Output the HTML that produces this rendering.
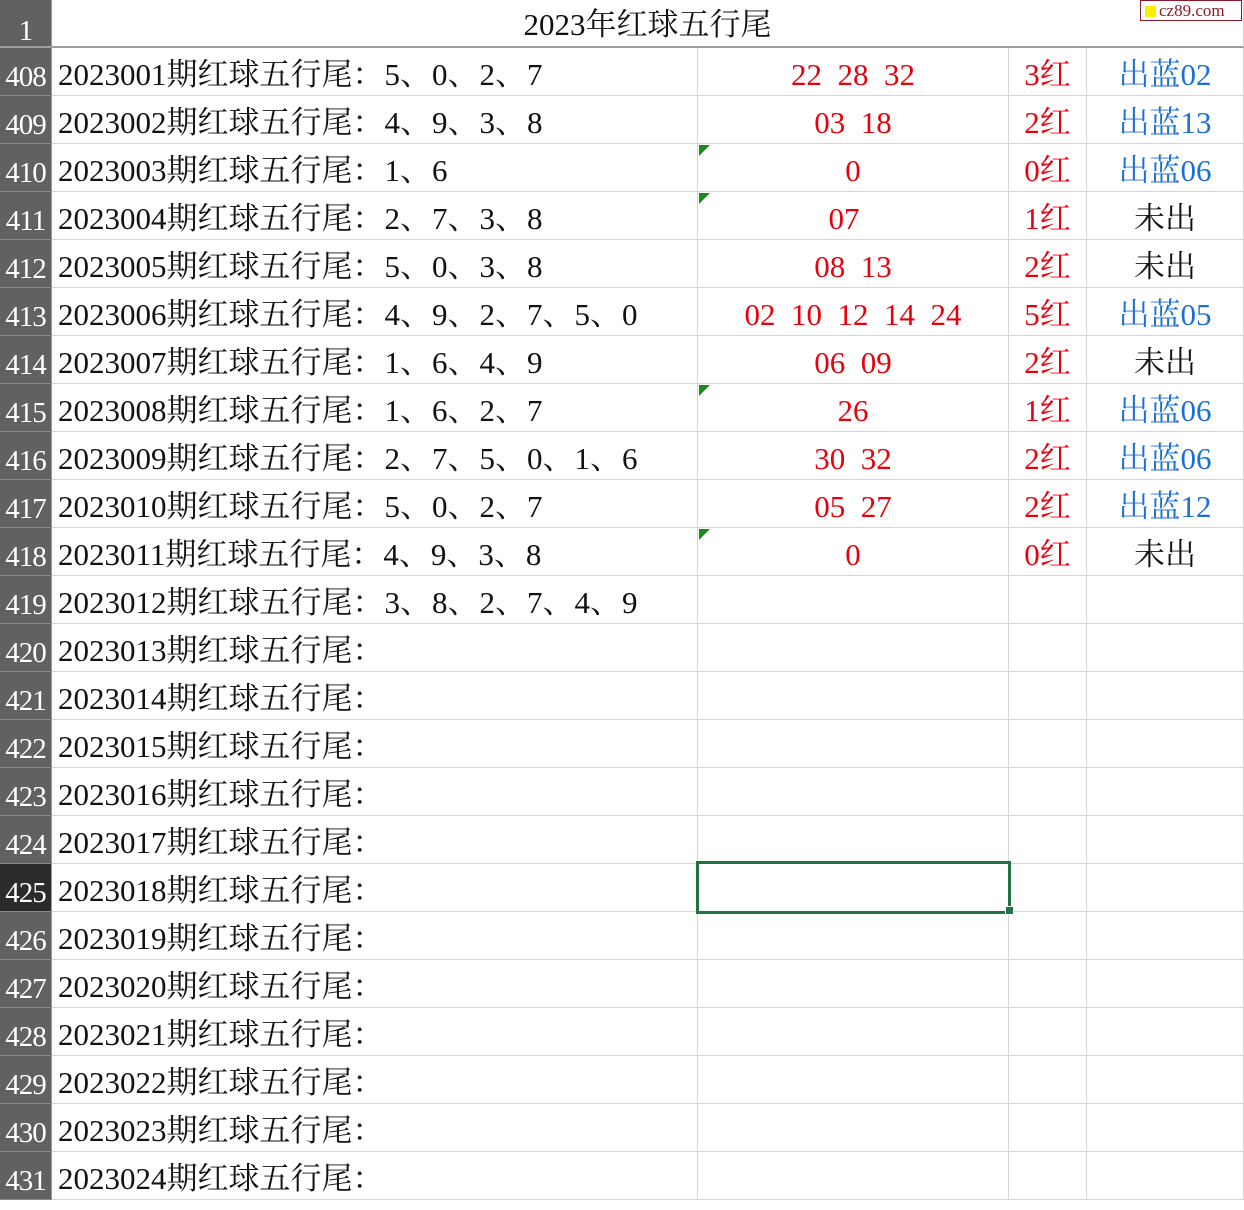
<!DOCTYPE html>
<html><head><meta charset="utf-8"><style>
body{margin:0;width:1244px;height:1198px;overflow:hidden;background:#fff;font-family:"Liberation Serif","Noto Serif CJK SC",serif;position:relative;}
.row{position:absolute;left:0;width:1244px;height:48px;display:flex;}
.row>div{box-sizing:border-box;height:48px;border-right:1px solid #d4d4d4;border-bottom:1px solid #d4d4d4;font-size:31px;white-space:nowrap;line-height:54px;position:relative;overflow:visible;}
.row>.h{width:52px;background:#616161;color:#fff;font-size:29px;text-align:center;border-right:1px solid #9a9a9a;border-bottom:1px solid #8a8a8a;line-height:58px;letter-spacing:-1px;}
.a{width:646px;padding-left:6px;color:#111;}
.b{width:311px;text-align:center;}
.c{width:78px;text-align:center;}
.d{width:157px;text-align:center;}
.p{display:inline-block;width:32px;text-align:left;}
.r{color:#e8000b}.bl{color:#1d6fd8}.k{color:#111}
.t::before{content:"";position:absolute;left:1px;top:1px;border-top:11px solid #1a8a1a;border-right:11px solid transparent;}
</style></head><body>
<div class="row" style="top:0;height:48px">
<div class="h" style="height:48px;border-bottom:2px solid #9e9e9e;line-height:62px">1</div>
<div style="width:1192px;height:48px;border-bottom:2px solid #9e9e9e;text-align:center;line-height:50px;color:#111">2023年红球五行尾</div>
</div>
<div class="row" style="top:48px"><div class="h">408</div><div class="a">2023001期红球五行尾<span class="p">：</span>5<span class="p">、</span>0<span class="p">、</span>2<span class="p">、</span>7</div><div class="b r">22&nbsp;&nbsp;28&nbsp;&nbsp;32</div><div class="c r">3红</div><div class="d bl">出蓝02</div></div>
<div class="row" style="top:96px"><div class="h">409</div><div class="a">2023002期红球五行尾<span class="p">：</span>4<span class="p">、</span>9<span class="p">、</span>3<span class="p">、</span>8</div><div class="b r">03&nbsp;&nbsp;18</div><div class="c r">2红</div><div class="d bl">出蓝13</div></div>
<div class="row" style="top:144px"><div class="h">410</div><div class="a">2023003期红球五行尾<span class="p">：</span>1<span class="p">、</span>6</div><div class="b r t">0</div><div class="c r">0红</div><div class="d bl">出蓝06</div></div>
<div class="row" style="top:192px"><div class="h">411</div><div class="a">2023004期红球五行尾<span class="p">：</span>2<span class="p">、</span>7<span class="p">、</span>3<span class="p">、</span>8</div><div class="b r t" style="padding-right:18px">07</div><div class="c r">1红</div><div class="d k">未出</div></div>
<div class="row" style="top:240px"><div class="h">412</div><div class="a">2023005期红球五行尾<span class="p">：</span>5<span class="p">、</span>0<span class="p">、</span>3<span class="p">、</span>8</div><div class="b r">08&nbsp;&nbsp;13</div><div class="c r">2红</div><div class="d k">未出</div></div>
<div class="row" style="top:288px"><div class="h">413</div><div class="a">2023006期红球五行尾<span class="p">：</span>4<span class="p">、</span>9<span class="p">、</span>2<span class="p">、</span>7<span class="p">、</span>5<span class="p">、</span>0</div><div class="b r">02&nbsp;&nbsp;10&nbsp;&nbsp;12&nbsp;&nbsp;14&nbsp;&nbsp;24</div><div class="c r">5红</div><div class="d bl">出蓝05</div></div>
<div class="row" style="top:336px"><div class="h">414</div><div class="a">2023007期红球五行尾<span class="p">：</span>1<span class="p">、</span>6<span class="p">、</span>4<span class="p">、</span>9</div><div class="b r">06&nbsp;&nbsp;09</div><div class="c r">2红</div><div class="d k">未出</div></div>
<div class="row" style="top:384px"><div class="h">415</div><div class="a">2023008期红球五行尾<span class="p">：</span>1<span class="p">、</span>6<span class="p">、</span>2<span class="p">、</span>7</div><div class="b r t">26</div><div class="c r">1红</div><div class="d bl">出蓝06</div></div>
<div class="row" style="top:432px"><div class="h">416</div><div class="a">2023009期红球五行尾<span class="p">：</span>2<span class="p">、</span>7<span class="p">、</span>5<span class="p">、</span>0<span class="p">、</span>1<span class="p">、</span>6</div><div class="b r">30&nbsp;&nbsp;32</div><div class="c r">2红</div><div class="d bl">出蓝06</div></div>
<div class="row" style="top:480px"><div class="h">417</div><div class="a">2023010期红球五行尾<span class="p">：</span>5<span class="p">、</span>0<span class="p">、</span>2<span class="p">、</span>7</div><div class="b r">05&nbsp;&nbsp;27</div><div class="c r">2红</div><div class="d bl">出蓝12</div></div>
<div class="row" style="top:528px"><div class="h">418</div><div class="a">2023011期红球五行尾<span class="p">：</span>4<span class="p">、</span>9<span class="p">、</span>3<span class="p">、</span>8</div><div class="b r t">0</div><div class="c r">0红</div><div class="d k">未出</div></div>
<div class="row" style="top:576px"><div class="h">419</div><div class="a">2023012期红球五行尾<span class="p">：</span>3<span class="p">、</span>8<span class="p">、</span>2<span class="p">、</span>7<span class="p">、</span>4<span class="p">、</span>9</div><div class="b"></div><div class="c"></div><div class="d"></div></div>
<div class="row" style="top:624px"><div class="h">420</div><div class="a">2023013期红球五行尾<span class="p">：</span></div><div class="b"></div><div class="c"></div><div class="d"></div></div>
<div class="row" style="top:672px"><div class="h">421</div><div class="a">2023014期红球五行尾<span class="p">：</span></div><div class="b"></div><div class="c"></div><div class="d"></div></div>
<div class="row" style="top:720px"><div class="h">422</div><div class="a">2023015期红球五行尾<span class="p">：</span></div><div class="b"></div><div class="c"></div><div class="d"></div></div>
<div class="row" style="top:768px"><div class="h">423</div><div class="a">2023016期红球五行尾<span class="p">：</span></div><div class="b"></div><div class="c"></div><div class="d"></div></div>
<div class="row" style="top:816px"><div class="h">424</div><div class="a">2023017期红球五行尾<span class="p">：</span></div><div class="b"></div><div class="c"></div><div class="d"></div></div>
<div class="row" style="top:864px"><div class="h" style="background:#2b2b2b">425</div><div class="a">2023018期红球五行尾<span class="p">：</span></div><div class="b"></div><div class="c"></div><div class="d"></div></div>
<div class="row" style="top:912px"><div class="h">426</div><div class="a">2023019期红球五行尾<span class="p">：</span></div><div class="b"></div><div class="c"></div><div class="d"></div></div>
<div class="row" style="top:960px"><div class="h">427</div><div class="a">2023020期红球五行尾<span class="p">：</span></div><div class="b"></div><div class="c"></div><div class="d"></div></div>
<div class="row" style="top:1008px"><div class="h">428</div><div class="a">2023021期红球五行尾<span class="p">：</span></div><div class="b"></div><div class="c"></div><div class="d"></div></div>
<div class="row" style="top:1056px"><div class="h">429</div><div class="a">2023022期红球五行尾<span class="p">：</span></div><div class="b"></div><div class="c"></div><div class="d"></div></div>
<div class="row" style="top:1104px"><div class="h">430</div><div class="a">2023023期红球五行尾<span class="p">：</span></div><div class="b"></div><div class="c"></div><div class="d"></div></div>
<div class="row" style="top:1152px"><div class="h">431</div><div class="a">2023024期红球五行尾<span class="p">：</span></div><div class="b"></div><div class="c"></div><div class="d"></div></div>
<div style="position:absolute;left:696px;top:861px;width:309px;height:47px;border:3px solid #217346;"></div>
<div style="position:absolute;left:1005px;top:906px;width:7px;height:7px;background:#217346;border:1px solid #fff;"></div>
<div style="position:absolute;left:1140px;top:0;width:100px;height:19px;border:1px solid #8b1a2a;background:#fff;font-size:17px;line-height:19px;color:#8b1a2a;">
<span style="display:inline-block;width:11px;height:11px;background:#ffee00;margin:0 3px 0 4px;vertical-align:-1px"></span>cz89.com</div>
</body></html>
